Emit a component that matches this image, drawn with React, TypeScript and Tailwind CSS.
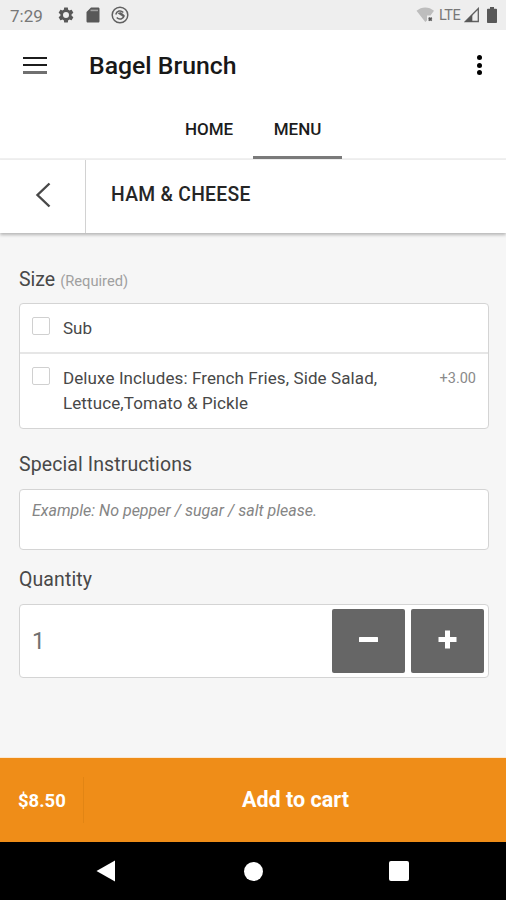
import type { ReactNode } from "react";

function StatusBar() {
  return (
    <div className="flex h-[30px] items-center bg-[#eeeeee] pl-[10px] pr-[9px] text-[#646464]">
      <span className="w-[47px] whitespace-nowrap pt-[1px] text-[17px] leading-[30px] text-[#777777]">7:29</span>
      <svg className="h-[18px] w-[18px]" viewBox="0 0 24 24" fill="#585858">
        <path
          fillRule="evenodd"
          d="M19.43 12.98c.04-.32.07-.64.07-.98s-.03-.66-.07-.98l2.11-1.65c.19-.15.24-.42.12-.64l-2-3.46c-.12-.22-.39-.3-.61-.22l-2.49 1c-.52-.4-1.08-.73-1.69-.98l-.38-2.65C14.46 2.18 14.25 2 14 2h-4c-.25 0-.46.18-.49.42l-.38 2.65c-.61.25-1.17.59-1.69.98l-2.49-1c-.23-.09-.49 0-.61.22l-2 3.46c-.13.22-.07.49.12.64l2.11 1.65c-.04.32-.07.65-.07.98s.03.66.07.98l-2.11 1.65c-.19.15-.24.42-.12.64l2 3.46c.12.22.39.3.61.22l2.49-1c.52.4 1.08.73 1.69.98l.38 2.65c.03.24.24.42.49.42h4c.25 0 .46-.18.49-.42l.38-2.65c.61-.25 1.17-.59 1.69-.98l2.49 1c.23.09.49 0 .61-.22l2-3.46c.12-.22.07-.49-.12-.64zM12 16a4 4 0 1 1 0-8 4 4 0 0 1 0 8z"
        />
      </svg>
      <svg className="ml-[11px] h-[16px] w-[14px]" viewBox="0 0 14 16">
        <path d="M5 .5h7.2c.7 0 1.3.6 1.3 1.3v12.4c0 .7-.6 1.3-1.3 1.3H1.8c-.7 0-1.3-.6-1.3-1.3V5z" fill="#585858" />
        <path d="M4.500 3.400h7.500" stroke="#a0a0a0" strokeWidth="1.600" />
      </svg>
      <svg className="ml-[11px] h-[18px] w-[18px]" viewBox="0 0 18 18" fill="none" stroke="#606060">
        <circle cx="9" cy="9" r="7.8" strokeWidth="1.5" />
        <path d="M4.800 8.500C5.500 4.800 9.800 3.800 12.300 6.500M13.200 9.500c-.7 3.700-5 4.700-7.500 2" strokeWidth="1.500" />
        <path d="M6.800 7.200 9.800 6.300l3.600 2.900-1 1.800-2.600-1.800z" fill="#606060" strokeWidth=".4" />
      </svg>
      <div className="flex-1" />
      <svg className="h-[16px] w-[19px]" viewBox="0 0 19 16">
        <path d="M.5 3.800C5.700-.7 12.800-.7 18 3.800L14.500 8.500H11v5L9.300 15z" fill="#bdbdbd" />
        <path d="m12.700 10.700 3 3m0-3-3 3" stroke="#585858" strokeWidth="1.700" />
      </svg>
      <span className="ml-[4px] w-[23px] whitespace-nowrap pt-[1px] text-[14.5px] leading-[30px] tracking-[-0.5px] text-[#777777]">LTE</span>
      <svg className="ml-[2px] h-[16px] w-[16px]" viewBox="0 0 16 16">
        <path d="M14.300 1.500v13H1.500z" fill="none" stroke="#606060" strokeWidth="1.300" />
        <path d="M1 15 8.300 7.500V15z" fill="#585858" />
      </svg>
      <svg className="ml-[7px] h-[16px] w-[10px]" viewBox="0 0 10 16" fill="#585858">
        <path d="M3 0h4v1.700h2.200c.4 0 .8.300.8.800v12.700c0 .5-.4.800-.8.800H.8a.8.8 0 0 1-.8-.8V2.500c0-.5.4-.8.8-.8H3z" />
      </svg>
    </div>
  );
}

function Toolbar() {
  return (
    <div className="flex h-[70px] items-center bg-white pl-[23px] pr-[22px]">
      <div className="flex w-[24px] flex-col gap-[5px]">
        <div className="h-[2px] bg-[#1c1c1c]" />
        <div className="h-[2px] bg-[#1c1c1c]" />
        <div className="h-[3px] bg-[#707070]" />
      </div>
      <h1 className="ml-[42px] whitespace-nowrap pt-[1px] text-[24.8px] font-medium leading-[32px] text-[#181818]">Bagel Brunch</h1>
      <div className="ml-auto flex w-[9px] flex-col items-center gap-[2.5px]">
        <div className="h-[5px] w-[5px] rounded-full bg-black" />
        <div className="h-[5px] w-[5px] rounded-full bg-black" />
        <div className="h-[5px] w-[5px] rounded-full bg-black" />
      </div>
    </div>
  );
}

function Tabs() {
  return (
    <div className="flex h-[60px] justify-center border-b-2 border-[#f0f0f0] bg-white text-[17px] font-medium text-[#1c1c1c]">
      <div className="flex h-[58px] w-[89px] items-center justify-center pl-[1px] pt-[1px]">HOME</div>
      <div className="h-[59px] w-[89px] border-b-[3px] border-[#7a7a7a] pt-[1px] text-center leading-[57px]">MENU</div>
    </div>
  );
}

function Checkbox() {
  return <div className="mt-[1px] h-[18px] w-[18px] shrink-0 rounded-[2px] border-[1.5px] border-[#d0d0d0] bg-white" />;
}

function StepButton({ children }: { children: ReactNode }) {
  return (
    <button className="flex h-[64px] w-[73px] items-center justify-center rounded-[2px] bg-[#666666] pb-[3px]">
      <svg className="h-[19px] w-[19px]" viewBox="0 0 19 19" fill="white">{children}</svg>
    </button>
  );
}

export default function App() {
  return (
    <div className="flex h-[900px] w-[506px] flex-col overflow-hidden bg-[#f6f6f6] font-['Roboto','Liberation_Sans',sans-serif]">
      <StatusBar />
      <Toolbar />
      <Tabs />
      <div className="flex h-[73px] shrink-0 bg-white shadow-[0_2px_3px_rgba(0,0,0,0.26)]">
        <div className="flex w-[86px] items-center justify-center border-r border-[#d2d2d2] pb-[3px]">
          <svg className="h-[26px] w-[16px]" viewBox="0 0 16 26" fill="none" stroke="#484848" strokeWidth="2.4">
            <path d="M14.500 1.500 2.500 13l12 11.500" />
          </svg>
        </div>
        <h2 className="whitespace-nowrap pl-[25px] text-[19.3px] font-medium leading-[70px] tracking-[0.3px] text-[#262626]">HAM &amp; CHEESE</h2>
      </div>

      <main className="flex flex-1 flex-col pl-[19px] pr-[17px] text-[#484848]">
        <div className="flex h-[70px] items-end pb-[8px]">
          <div className="flex items-baseline whitespace-nowrap leading-[28px]">
            <span className="text-[19.5px]">Size</span>
            <span className="ml-[5px] text-[14.7px] text-[#a0a0a0]">(Required)</span>
          </div>
        </div>
        <div className="h-[126px] rounded-[4px] border-[1.5px] border-[#d4d4d4] bg-white text-[17px] leading-[25px]">
          <div className="flex h-[50px] border-b-2 border-[#e6e6e6] px-[12px] pt-[12px]">
            <Checkbox />
            <span className="ml-[13px]">Sub</span>
          </div>
          <div className="flex px-[12px] pt-[12px]">
            <Checkbox />
            <span className="ml-[13px] whitespace-nowrap tracking-[0.1px]">
              Deluxe Includes: French Fries, Side Salad,
              <br />
              Lettuce,Tomato &amp; Pickle
            </span>
            <span className="ml-auto whitespace-nowrap text-[14.5px] text-[#8a8a8a]">+3.00</span>
          </div>
        </div>

        <div className="flex h-[60px] items-end pb-[10px] text-[19.5px] leading-[28px] tracking-[0.1px]">Special Instructions</div>
        <div className="h-[61px] rounded-[4px] border-[1.5px] border-[#d4d4d4] bg-white px-[12px] pt-[9px] text-[16px] italic leading-[24px] text-[#858585]">
          <span className="whitespace-nowrap">Example: No pepper / sugar / salt please.</span>
        </div>

        <div className="flex h-[54px] items-end pb-[10px] text-[19.5px] leading-[28px] tracking-[0.1px]">Quantity</div>
        <div className="flex h-[74px] items-center gap-[6px] rounded-[4px] border-[1.5px] border-[#d4d4d4] bg-white pl-[12px] pr-[4px]">
          <span className="flex-1 pt-[1px] text-[23px] leading-[30px] text-[#707070]">1</span>
          <StepButton>
            <rect x="0" y="7" width="19" height="5" rx=".5" />
          </StepButton>
          <StepButton>
            <path d="M7 .5h5V7h6.500v5H12v6.500H7V12H.5V7H7z" />
          </StepButton>
        </div>
      </main>

      <div className="flex h-[84px] shrink-0 items-center bg-[#ef8d18] font-bold text-white shadow-[0_-1px_0_#fbe8d3]">
        <div className="flex h-[46px] w-[84px] items-center border-r border-[#e28514] pl-[18px] pt-[3px] text-[18.5px]">$8.50</div>
        <div className="flex-1 pl-[1px] pt-[1px] text-center text-[21.5px]">Add to cart</div>
      </div>
      <div className="flex h-[58px] shrink-0 items-center bg-black pl-[96px]">
        <svg className="h-[22px] w-[19px]" viewBox="0 0 19 22" fill="white">
          <path d="M19 .5v21L.5 11z" />
        </svg>
        <div className="ml-[129px] h-[19px] w-[19px] rounded-full bg-white" />
        <div className="ml-[126px] h-[20px] w-[20px] rounded-[2px] bg-white" />
      </div>
    </div>
  );
}
